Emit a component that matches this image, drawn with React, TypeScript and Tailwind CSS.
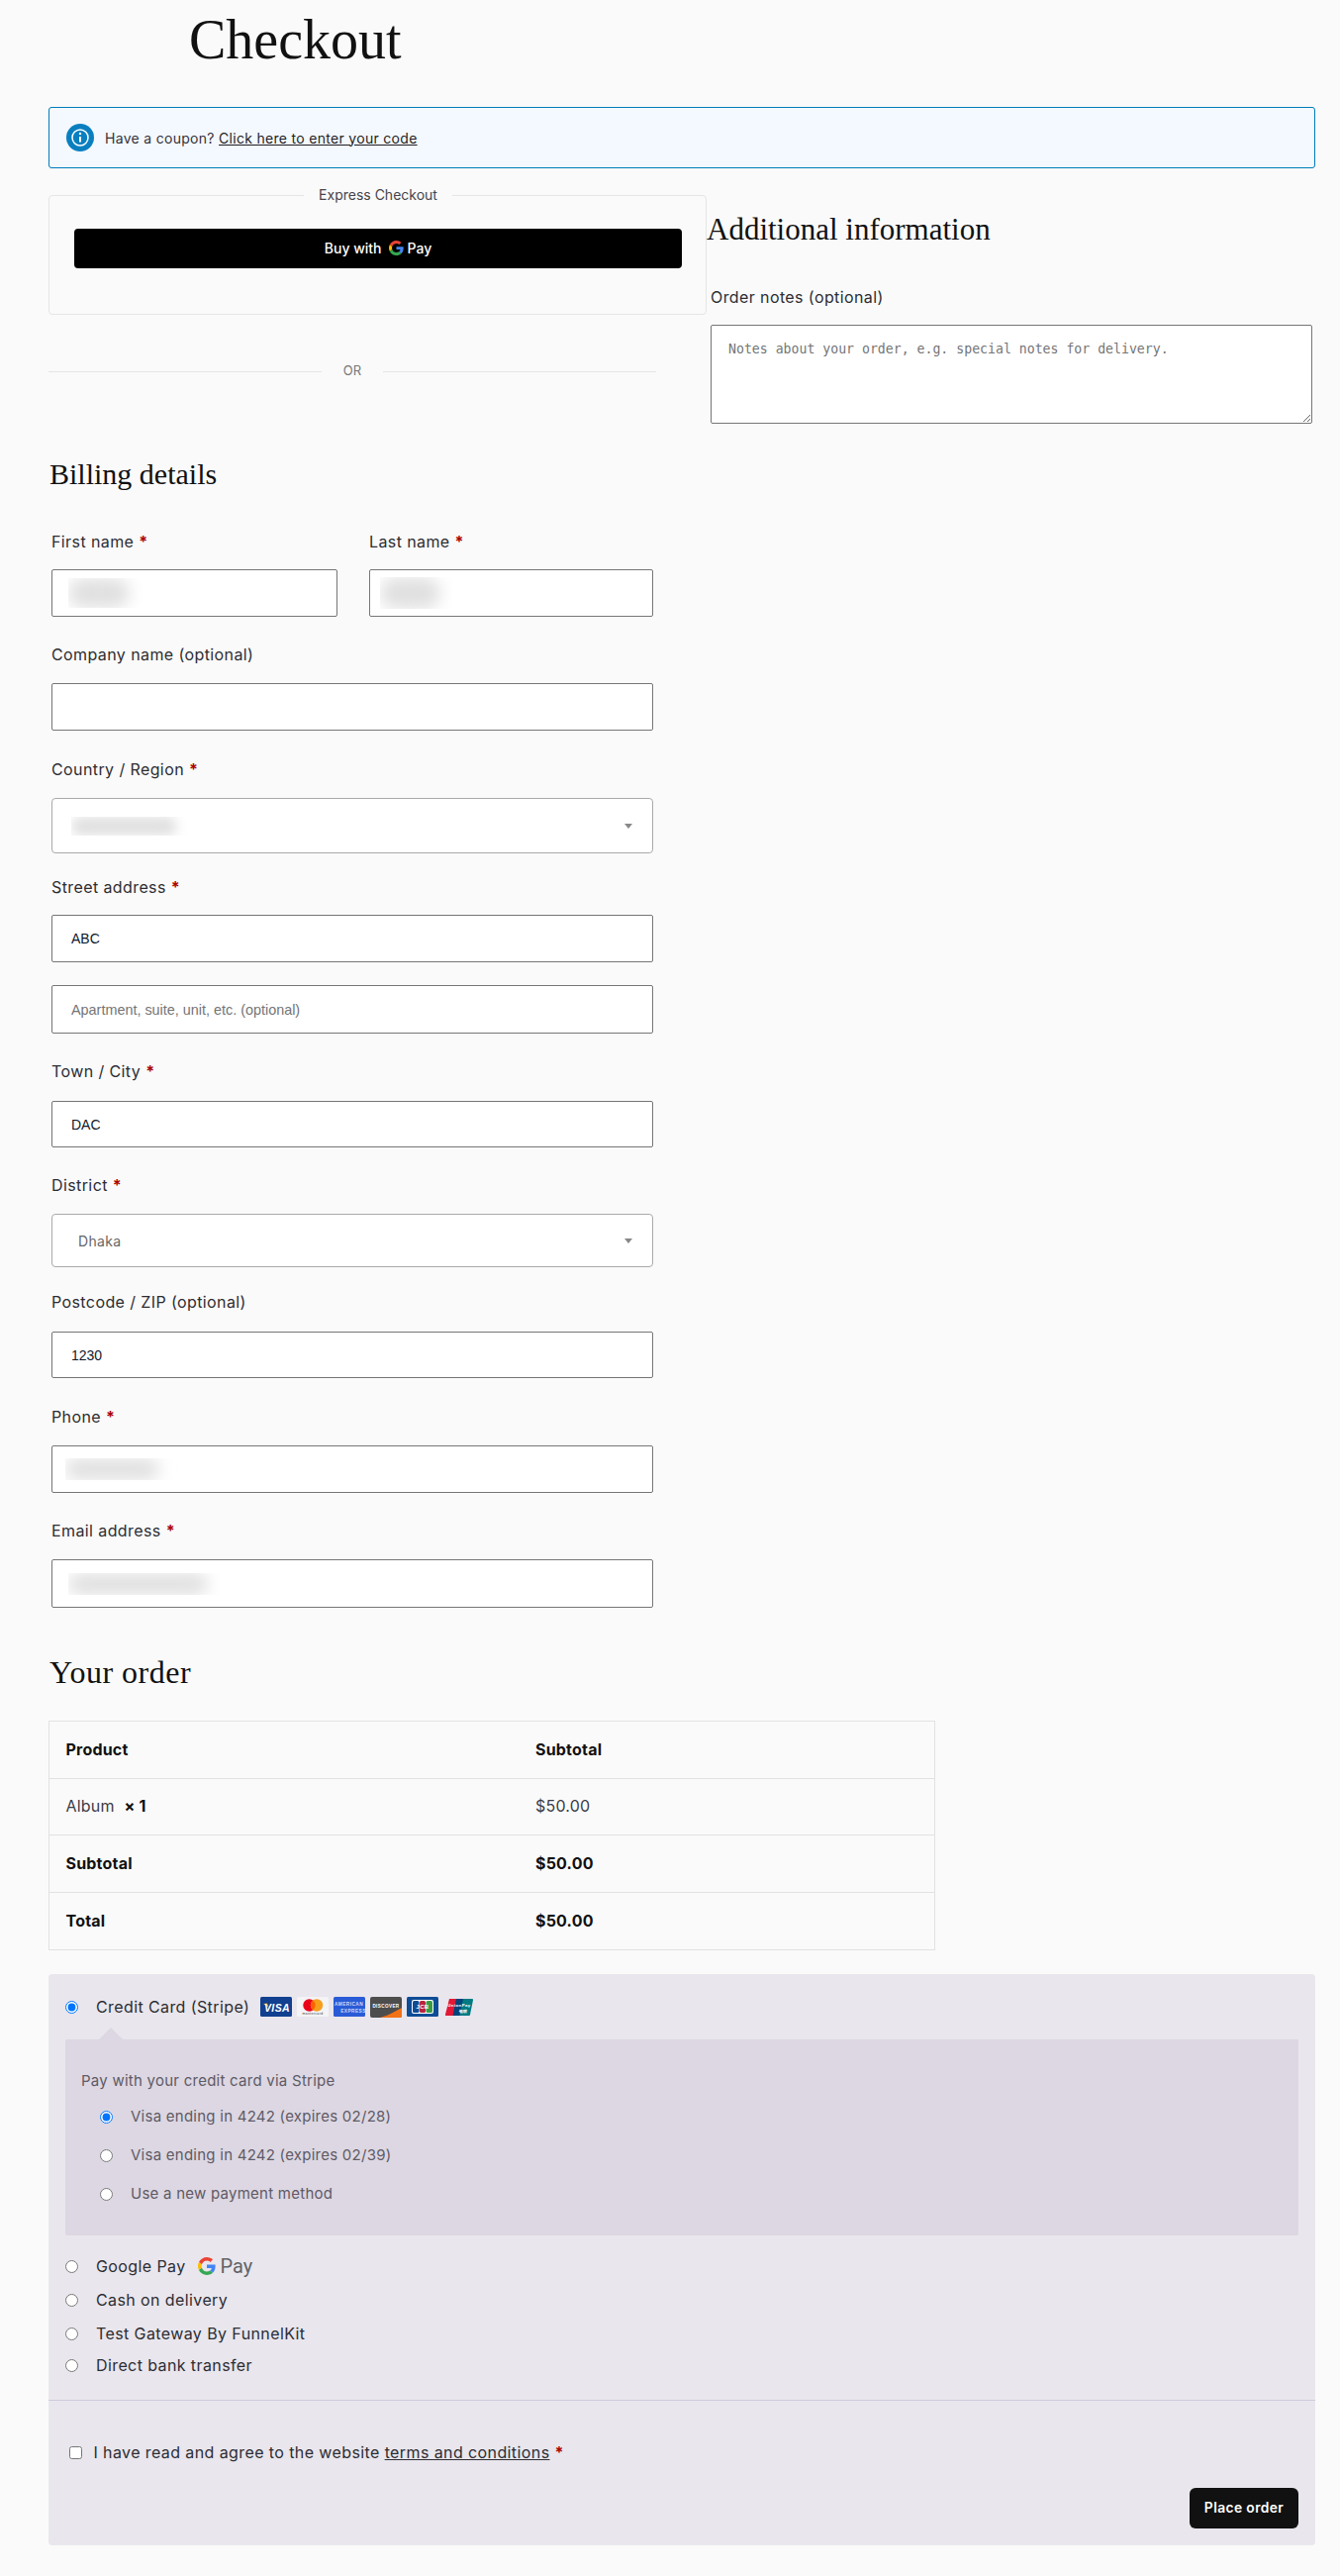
import type { ReactNode } from "react";

const serif = "font-['Liberation_Serif',serif] text-[#111]";

function GoogleG({ className }: { className: string }) {
  return (
    <svg viewBox="0 0 48 48" className={className}>
      <path fill="#EA4335" d="M24 9.5c3.54 0 6.71 1.22 9.21 3.6l6.85-6.85C35.9 2.38 30.47 0 24 0 14.62 0 6.51 5.38 2.56 13.22l7.98 6.19C12.43 13.72 17.74 9.5 24 9.5z" />
      <path fill="#4285F4" d="M46.98 24.55c0-1.57-.15-3.09-.38-4.55H24v9.02h12.94c-.58 2.96-2.26 5.48-4.78 7.18l7.73 6c4.51-4.18 7.09-10.36 7.09-17.65z" />
      <path fill="#FBBC05" d="M10.53 28.59c-.48-1.45-.76-2.99-.76-4.59s.27-3.14.76-4.59l-7.98-6.19C.92 16.46 0 20.12 0 24c0 3.88.92 7.54 2.56 10.78l7.97-6.19z" />
      <path fill="#34A853" d="M24 48c6.48 0 11.93-2.13 15.89-5.81l-7.73-6c-2.15 1.45-4.92 2.3-8.16 2.3-6.26 0-11.57-4.22-13.47-9.91l-7.98 6.19C6.51 42.62 14.62 48 24 48z" />
    </svg>
  );
}

function CardIcons() {
  return (
    <div className="flex items-center gap-[5px]">
      <svg viewBox="0 0 32 20" className="h-[20px] w-[32px]">
        <rect width="32" height="20" rx="1.5" fill="#10408f" />
        <path d="M3 7l4-.4 1.5 4z" fill="#f5a623" />
        <text x="17" y="14.5" textAnchor="middle" fontSize="10.5" fontWeight="800" fontStyle="italic" fontFamily="Liberation Sans" fill="#fff">VISA</text>
      </svg>
      <svg viewBox="0 0 32 20" className="h-[20px] w-[32px]">
        <rect width="32" height="20" rx="1.5" fill="#f4f3f5" />
        <circle cx="12.5" cy="8.5" r="6.2" fill="#eb001b" />
        <circle cx="20" cy="8.5" r="6.2" fill="#f79e1b" />
        <path d="M16.2 3.6a6.2 6.2 0 0 1 0 9.8 6.2 6.2 0 0 1 0-9.8z" fill="#ff5f00" />
        <text x="16" y="18.4" textAnchor="middle" fontSize="3.4" fontFamily="Liberation Sans" fill="#333">mastercard</text>
      </svg>
      <svg viewBox="0 0 32 20" className="h-[20px] w-[32px]">
        <rect width="32" height="20" rx="1.5" fill="#2a5bd7" />
        <text x="15.5" y="8.5" textAnchor="middle" fontSize="4.8" fontWeight="700" fontFamily="Liberation Sans" fill="#c9d8fa">AMERICAN</text>
        <text x="20" y="15.5" textAnchor="middle" fontSize="4.8" fontWeight="700" fontFamily="Liberation Sans" fill="#c9d8fa">EXPRESS</text>
      </svg>
      <svg viewBox="0 0 32 21" className="h-[21px] w-[32px]">
        <rect width="32" height="21" rx="2" fill="#4d4d4d" />
        <path d="M10 21C18 19 25 15 32 11v8a2 2 0 0 1-2 2z" fill="#f47216" />
        <text x="16" y="11" textAnchor="middle" fontSize="4.6" fontWeight="700" fontFamily="Liberation Sans" fill="#fff">DISCOVER</text>
      </svg>
      <svg viewBox="0 0 32 20" className="h-[20px] w-[32px]">
        <rect width="32" height="20" rx="1.5" fill="#0e4c96" />
        <rect x="5" y="3" width="22" height="14" rx="2" fill="#fff" />
        <rect x="6" y="4" width="6.5" height="12" rx="1.5" fill="#0e4c96" />
        <rect x="13" y="4" width="6" height="12" rx="1.5" fill="#b9233f" />
        <rect x="19.5" y="4" width="6.5" height="12" rx="1.5" fill="#3a9b46" />
        <text x="16" y="12" textAnchor="middle" fontSize="6" fontWeight="700" fontFamily="Liberation Sans" fill="#fff">JCB</text>
      </svg>
      <svg viewBox="0 0 28 17" className="ml-[2px] h-[17px] w-[28px]">
        <path d="M4 0h9L9.5 17H1a1 1 0 0 1-1-1.2z" fill="#e21836" />
        <path d="M11 0h9l-3.500 17H7.500z" fill="#00447c" />
        <path d="M18 0h9a1 1 0 0 1 1 1.200L25 16a1 1 0 0 1-1 1h-9.500z" fill="#007b84" />
        <text x="14" y="8" textAnchor="middle" fontSize="4.400" fontWeight="700" fontFamily="Liberation Sans" fill="#fff">UnionPay</text>
        <text x="18" y="13.500" textAnchor="middle" fontSize="4.400" fontWeight="700" fontFamily="Liberation Sans" fill="#fff">银联</text>
      </svg>
    </div>
  );
}

function Label({ children, required, className }: { children: ReactNode; required?: boolean; className: string }) {
  return (
    <div className={`h-[24px] text-[16px] leading-[24px] tracking-[0.4px] text-[#2c2d33] ${className}`}>
      {children}
      {required && <span className="ml-[5px] font-bold text-[#a00]">*</span>}
    </div>
  );
}

function TextBox({ value, placeholder, className }: { value?: string; placeholder?: string; className: string }) {
  return (
    <input
      readOnly
      value={value ?? ""}
      placeholder={placeholder}
      className={`block w-full rounded-[2px] border border-[#767676] bg-white px-[19px] font-['Liberation_Sans',sans-serif] text-[14px] text-[#10182b] placeholder:text-[14.4px] placeholder:text-[#757575] ${className}`}
    />
  );
}

function BlurBox({ boxClass, wrapClass }: { boxClass: string; wrapClass: string }) {
  return (
    <div className={`flex w-full items-center rounded-[2px] border border-[#767676] bg-white ${boxClass}`}>
      <div className={`overflow-hidden ${wrapClass}`}>
        <div className="h-full w-[82%] rounded-full bg-[#e0e0e0] blur-[8px]" />
      </div>
    </div>
  );
}

function SelectBox({ className, children }: { className: string; children?: ReactNode }) {
  return (
    <div className={`flex w-full items-center justify-between rounded-[4px] border border-[#aaa] bg-white pr-[20px] ${className}`}>
      <div>{children}</div>
      <div className="h-0 w-0 border-x-[4px] border-t-[5px] border-x-transparent border-t-[#888]" />
    </div>
  );
}

function Radio({ checked }: { checked?: boolean }) {
  return <input type="radio" readOnly checked={!!checked} className="h-[13px] w-[13px] shrink-0" />;
}

function OrderRow({ label, value, bold, className }: { label: ReactNode; value: string; bold?: boolean; className: string }) {
  const cell = bold ? "font-bold text-[#111]" : "text-[#3c3c46]";
  return (
    <tr className={`border border-[#e2e2e2] ${className}`}>
      <td className={`w-[475px] px-[16.500px] pb-[2px] text-[16px] tracking-[0.2px] ${cell}`}>{label}</td>
      <td className={`px-[16.500px] pb-[2px] text-[16px] tracking-[0.2px] ${cell}`}>{value}</td>
    </tr>
  );
}

export default function App() {
  return (
    <div className="min-h-[2602px] bg-[#fafafa] pl-[49px] pr-[25px] font-['Inter',sans-serif]">
      <div className="h-[108px] pl-[142px] pt-[12px]">
        <h1 className={`text-[56px] leading-[56px] ${serif}`}>Checkout</h1>
      </div>

      {/* coupon notice */}
      <div className="flex h-[62px] items-center rounded-[3px] border border-[#007cba] bg-[#f4f8ff] pl-[17px]">
        <div className="flex h-[28px] w-[28px] items-center justify-center rounded-full bg-[#0a7fc0]">
          <svg viewBox="0 0 20 20" className="h-[20px] w-[20px]" fill="none" stroke="#fff">
            <circle cx="10" cy="10" r="8" strokeWidth="1.5" />
            <path d="M10 9v5.500" strokeWidth="2" />
            <circle cx="10" cy="6" r="1.200" fill="#fff" stroke="none" />
          </svg>
        </div>
        <p className="ml-[11px] text-[14px] tracking-[0.3px] text-[#33333b]">
          Have a coupon? <span className="text-[#1e1e24] underline">Click here to enter your code</span>
        </p>
      </div>

      <div className="mt-[17px] flex">
        <div className="w-[665px] shrink-0">
          <fieldset className="h-[131px] rounded-[4px] border border-[#e5e5e5] pl-[25px] pr-[24px]">
            <legend className="mx-auto px-[15px] text-[14px] leading-[20px] text-[#45454d]">Express Checkout</legend>
            <button className="mt-[24px] flex h-[40px] w-full items-center justify-center rounded-[4px] bg-black pb-[1px] text-[14px] font-medium text-white">
              Buy with
              <GoogleG className="ml-[7px] mr-[4px] h-[15px] w-[15px]" />
              Pay
            </button>
          </fieldset>

          <div className="mt-[47px] flex h-[20px] w-[614px] items-center">
            <div className="h-px w-[276px] bg-[#e5e5e5]" />
            <div className="w-[62px] text-center text-[13px] text-[#777]">OR</div>
            <div className="h-px flex-1 bg-[#e5e5e5]" />
          </div>

          <h3 className={`mt-[76px] pl-[1px] text-[30px] leading-[36px] ${serif}`}>Billing details</h3>

          {/* billing form */}
          <div className="mt-[38px] w-[611px] pl-[3px]">
            <div className="flex gap-[32px]">
              <div className="w-[289px]">
                <Label required className="mb-[16px]">First name</Label>
                <BlurBox boxClass="h-[48px] pl-[16px]" wrapClass="h-[30px] w-[76px]" />
              </div>
              <div className="flex-1">
                <Label required className="mb-[16px]">Last name</Label>
                <BlurBox boxClass="h-[48px] pl-[10px]" wrapClass="h-[32px] w-[74px]" />
              </div>
            </div>

            <Label className="mb-[17px] mt-[26px]">Company name (optional)</Label>
            <TextBox className="h-[48px]" />

            <Label required className="mb-[17px] mt-[27px]">Country / Region</Label>
            <SelectBox className="h-[56px] pl-[19px]">
              <div className="h-[19px] w-[124px] overflow-hidden">
                <div className="h-full w-[86%] rounded-full bg-[#e0e0e0] blur-[6px]" />
              </div>
            </SelectBox>

            <Label required className="mb-[16px] mt-[22px]">Street address</Label>
            <TextBox className="h-[48px]" value="ABC" />
            <TextBox className="mt-[23px] h-[49px]" placeholder="Apartment, suite, unit, etc. (optional)" />

            <Label required className="mb-[18px] mt-[26px]">Town / City</Label>
            <TextBox className="h-[47px]" value="DAC" />

            <Label required className="mb-[17px] mt-[26px]">District</Label>
            <SelectBox className="h-[54px] pl-[26px]">
              <span className="text-[14px] tracking-[0.3px] text-[#666]">Dhaka</span>
            </SelectBox>

            <Label className="mb-[18px] mt-[23px]">Postcode / ZIP (optional)</Label>
            <TextBox className="h-[47px]" value="1230" />

            <Label required className="mb-[17px] mt-[27px]">Phone</Label>
            <BlurBox boxClass="h-[48px] pl-[13px]" wrapClass="h-[22px] w-[116px]" />

            <Label required className="mb-[17px] mt-[26px]">Email address</Label>
            <BlurBox boxClass="h-[49px] pl-[16px]" wrapClass="h-[22px] w-[172px]" />
          </div>
        </div>

        <div className="flex-1">
          <h3 className={`mt-[27px] text-[31px] leading-[36px] ${serif}`}>Additional information</h3>
          <div className="mt-[38px] pl-[4px]">
            <Label className="mb-[16px]">Order notes (optional)</Label>
            <textarea
              readOnly
              placeholder="Notes about your order, e.g. special notes for delivery."
              className="block h-[100px] w-[608px] rounded-[2px] border border-[#767676] bg-white px-[17px] py-[14px] font-['DejaVu_Sans_Mono',monospace] text-[13.200px] placeholder:text-[#757575]"
            />
          </div>
        </div>
      </div>

      <h3 className={`mt-[47px] pl-[1px] text-[32px] leading-[36px] tracking-[0.5px] ${serif}`}>Your order</h3>

      <table className="mt-[31px] w-[896px] border-collapse text-left">
        <tbody>
          <OrderRow bold className="h-[58px]" label="Product" value="Subtotal" />
          <OrderRow
            className="h-[57px]"
            label={
              <>
                Album <b className="ml-[5px] text-[#111]">× 1</b>
              </>
            }
            value="$50.00"
          />
          <OrderRow bold className="h-[58px]" label="Subtotal" value="$50.00" />
          <OrderRow bold className="h-[58px]" label="Total" value="$50.00" />
        </tbody>
      </table>

      {/* payment methods */}
      <div className="mt-[24px] rounded-[4px] bg-[#e9e6ed] pt-[21px] text-[16px] tracking-[0.4px] text-[#2c2d33]">
        <div className="flex h-[24px] items-center pl-[17px]">
          <Radio checked />
          <span className="ml-[18px]">Credit Card (Stripe)</span>
          <div className="ml-[11px]">
            <CardIcons />
          </div>
        </div>

        <div className="relative mx-[17px] mt-[21px] h-[198px] rounded-[2px] bg-[#dcd7e2] pl-[16px] pt-[32px] text-[15px] leading-[20px] tracking-[0.25px] text-[#5f5a66]">
          <div className="absolute -top-[12px] left-[34px] h-0 w-0 border-x-[12px] border-b-[12px] border-x-transparent border-b-[#dcd7e2]" />
          <p>Pay with your credit card via Stripe</p>
          <div className="mt-[14px] flex flex-col gap-[15px] pl-[18.500px]">
            <label className="flex h-[24px] items-center gap-[18.500px]"><Radio checked />Visa ending in 4242 (expires 02/28)</label>
            <label className="flex h-[24px] items-center gap-[18.500px]"><Radio />Visa ending in 4242 (expires 02/39)</label>
            <label className="flex h-[24px] items-center gap-[18.500px]"><Radio />Use a new payment method</label>
          </div>
        </div>

        <div className="mt-[19px] pl-[17px]">
          <label className="flex h-[24px] items-center gap-[18px]">
            <Radio />
            Google Pay
            <span className="-ml-[6px] flex items-center font-['Roboto',sans-serif] text-[20px] tracking-normal text-[#5f6368]">
              <GoogleG className="mr-[5px] h-[18px] w-[18px]" />
              Pay
            </span>
          </label>
          <label className="mt-[10px] flex h-[24px] items-center gap-[18px]"><Radio />Cash on delivery</label>
          <label className="mt-[10px] flex h-[24px] items-center gap-[18px]"><Radio />Test Gateway By FunnelKit</label>
          <label className="mt-[8px] flex h-[24px] items-center gap-[18px]"><Radio />Direct bank transfer</label>
        </div>

        <div className="mt-[23px] h-px bg-[#cfcbdd]" />

        <label className="ml-[20.500px] mt-[40px] flex h-[24px] items-center">
          <input type="checkbox" readOnly className="h-[13px] w-[13px]" />
          <span className="ml-[12px]">
            I have read and agree to the website <span className="underline">terms and conditions</span>
            <span className="ml-[5px] font-bold text-[#a00]">*</span>
          </span>
        </label>

        <div className="mt-[24px] flex justify-end pb-[17px] pr-[17px]">
          <button className="h-[41px] w-[110px] rounded-[6px] bg-[#111] text-[13.800px] font-semibold text-white">Place order</button>
        </div>
      </div>
    </div>
  );
}
